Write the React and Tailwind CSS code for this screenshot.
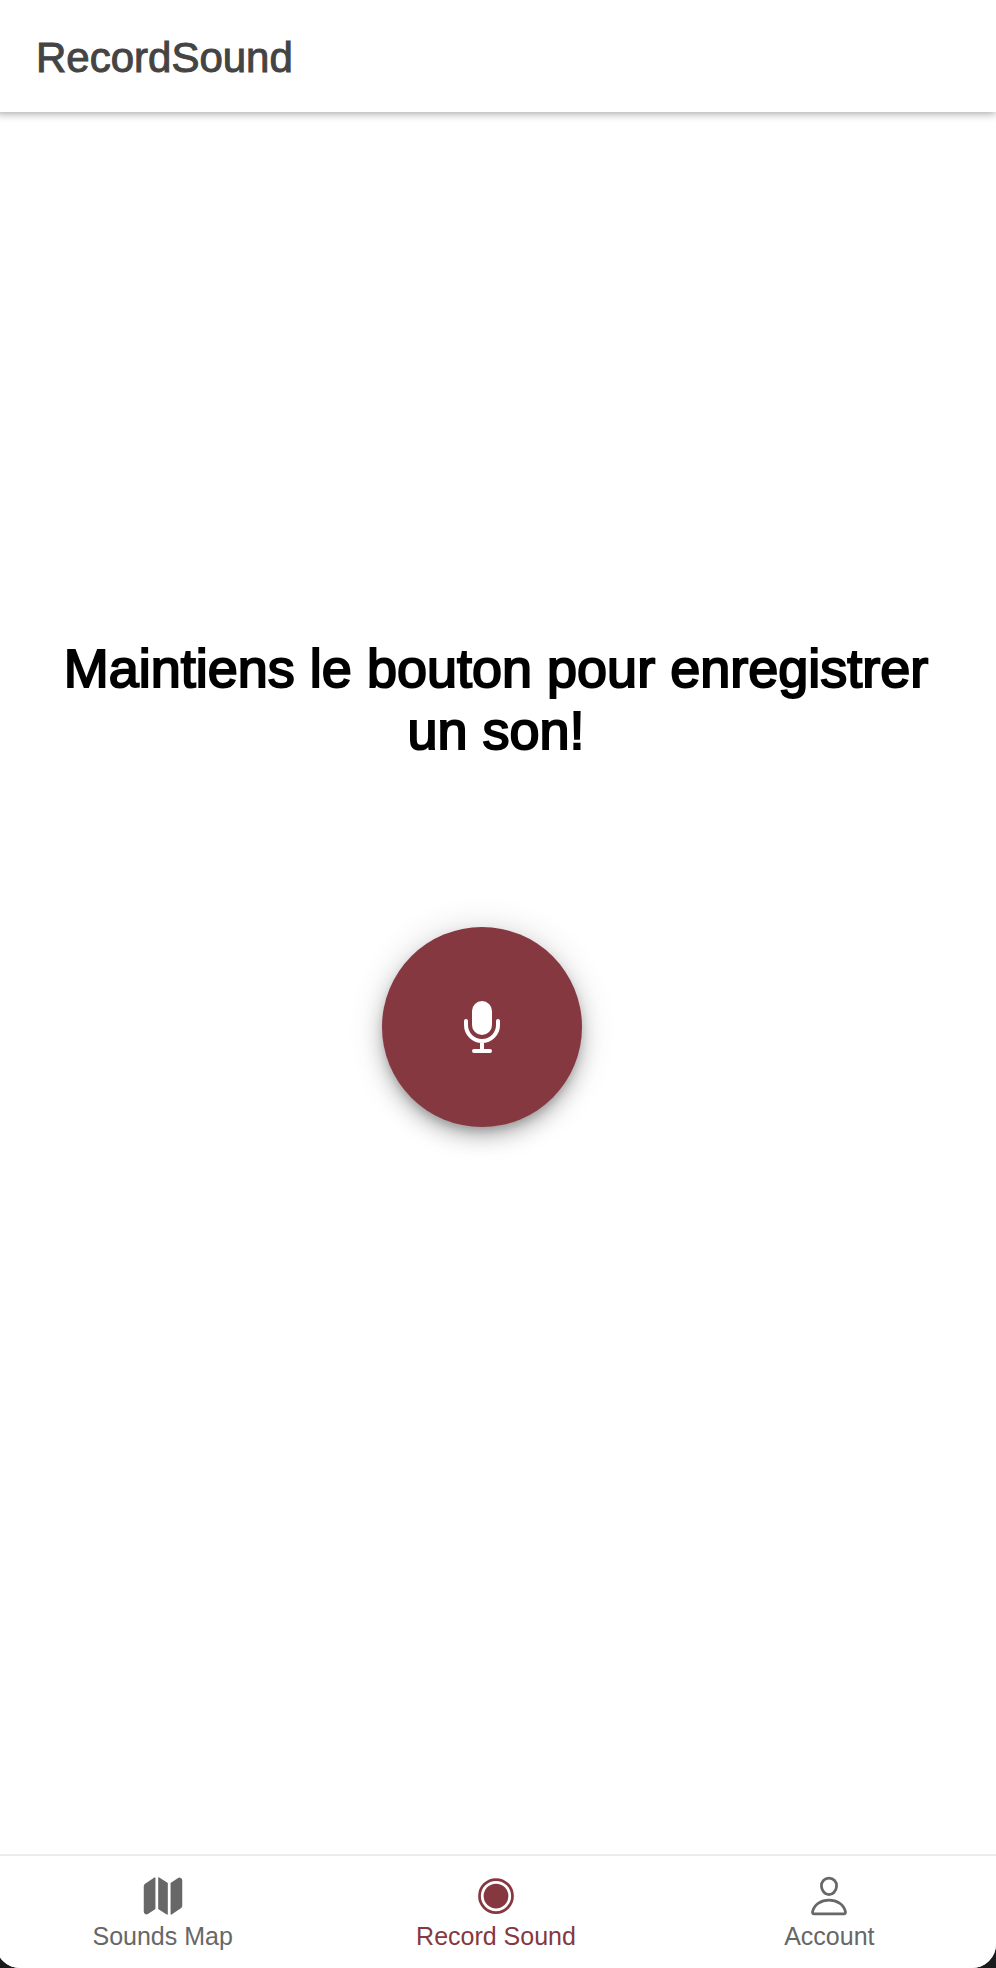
import { IoMap, IoRadioButtonOn, IoPersonOutline } from "react-icons/io5";

const tabs = [
  { label: "Sounds Map", icon: IoMap, active: false },
  { label: "Record Sound", icon: IoRadioButtonOn, active: true },
  { label: "Account", icon: IoPersonOutline, active: false },
];

function MicIcon() {
  return (
    <svg viewBox="0 0 36 52" className="h-[52px] w-9" fill="none" aria-hidden="true">
      <rect x="8" y="0" width="20" height="34" rx="10" fill="#fff" />
      <path
        d="M2 20v4a16 16 0 0 0 32 0v-4M18 40v10M10 50h16"
        stroke="#fff"
        strokeWidth="4"
        strokeLinecap="round"
      />
    </svg>
  );
}

function Header() {
  return (
    <header className="z-10 flex h-28 items-center bg-white px-10 pt-1 shadow-[0_1px_9px_rgba(0,0,0,0.4)]">
      <h1 className="text-[42px] leading-[48px] text-[#444] [-webkit-text-stroke:1px_#444]">
        RecordSound
      </h1>
    </header>
  );
}

function TabBar() {
  return (
    <nav className="grid grid-cols-3 border-t-2 border-[#ebebeb] bg-white pt-[18px] pb-4">
      {tabs.map(({ label, icon: Icon, active }) => (
        <a
          key={label}
          href="#"
          aria-current={active ? "page" : undefined}
          className={
            active
              ? "flex flex-col items-center gap-0.5 text-[#853840]"
              : "flex flex-col items-center gap-0.5 text-[#676767]"
          }
        >
          <Icon className="size-11" aria-hidden="true" />
          <span className="text-[25px] leading-8">{label}</span>
        </a>
      ))}
    </nav>
  );
}

export default function App() {
  return (
    <div className="flex min-h-screen flex-col overflow-x-hidden bg-[#1b1b1e] font-['Liberation_Sans',Arial,sans-serif]">
      <div className="-ml-1 flex flex-1 flex-col overflow-hidden rounded-b-[24px] bg-white">
        <Header />
        <main className="flex flex-1 flex-col items-center justify-center px-10 pb-[202px]">
          <h2 className="text-center text-[54px] leading-[62px] text-black [-webkit-text-stroke:2px_#000]">
            Maintiens le bouton pour enregistrer un son!
          </h2>
          <button
            type="button"
            aria-label="Enregistrer"
            className="mt-[166px] mr-7 flex size-[200px] items-center justify-center rounded-full bg-[#853840] shadow-[0_6px_10px_-2px_rgba(0,0,0,0.2),0_10px_20px_rgba(0,0,0,0.2),0_2px_36px_rgba(0,0,0,0.14)]"
          >
            <MicIcon />
          </button>
        </main>
        <TabBar />
      </div>
    </div>
  );
}
